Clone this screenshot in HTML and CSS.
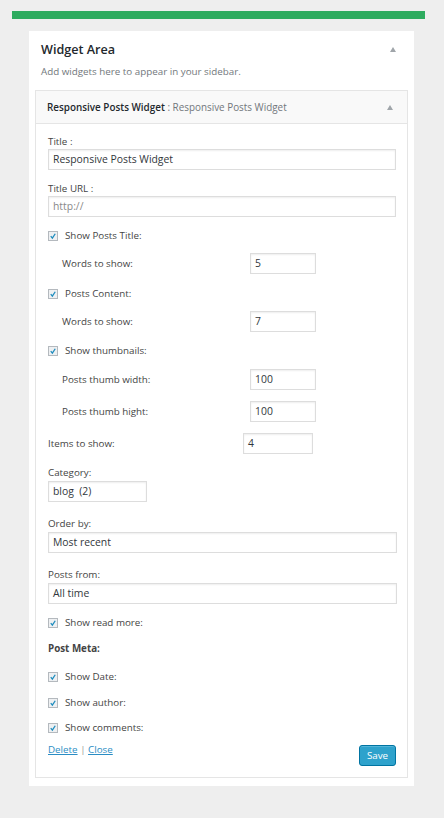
FILE: index.html
```html
<!DOCTYPE html>
<html>
<head>
<meta charset="utf-8">
<link rel="stylesheet" href="styles.css">
</head>
<body>
<div class="bar"></div>
<div class="card">
  <div class="card-head">
    <h2 class="card-title">Widget Area</h2>
    <span class="arrow"></span>
  </div>
  <p class="desc">Add widgets here to appear in your sidebar.</p>
  <div class="widget">
    <div class="widget-head">
      <span class="wt"><b>Responsive Posts Widget</b> : <span class="wt-sub">Responsive Posts Widget</span></span>
      <span class="arrow"></span>
    </div>
    <div class="widget-body">
      <div class="field first">
        <div class="label">Title :</div>
        <div class="box full">Responsive Posts Widget</div>
      </div>
      <div class="field">
        <div class="label">Title URL :</div>
        <div class="box full ph">http://</div>
      </div>
      <div class="check"><span class="cb"><svg viewBox="0 0 10 10"><path d="M2.2 5.2 L4.2 7.6 L7.8 2.2" fill="none" stroke="#1e8cbe" stroke-width="1.6"/></svg></span>Show Posts Title:</div>
      <div class="sub"><span class="sub-label">Words to show:</span><div class="box small">5</div></div>
      <div class="check loose"><span class="cb"><svg viewBox="0 0 10 10"><path d="M2.2 5.2 L4.2 7.6 L7.8 2.2" fill="none" stroke="#1e8cbe" stroke-width="1.6"/></svg></span>Posts Content:</div>
      <div class="sub"><span class="sub-label">Words to show:</span><div class="box small">7</div></div>
      <div class="check"><span class="cb"><svg viewBox="0 0 10 10"><path d="M2.2 5.2 L4.2 7.6 L7.8 2.2" fill="none" stroke="#1e8cbe" stroke-width="1.6"/></svg></span>Show thumbnails:</div>
      <div class="sub tight"><span class="sub-label">Posts thumb width:</span><div class="box small">100</div></div>
      <div class="sub tight"><span class="sub-label">Posts thumb hight:</span><div class="box small">100</div></div>
      <div class="sub items"><span class="items-label">Items to show:</span><div class="box items-box">4</div></div>
      <div class="field">
        <div class="label">Category:</div>
        <div class="box sel-small spaced">blog&nbsp; (2)</div>
      </div>
      <div class="field wide">
        <div class="label">Order by:</div>
        <div class="box sel spaced">Most recent</div>
      </div>
      <div class="field wide">
        <div class="label">Posts from:</div>
        <div class="box sel spaced">All time</div>
      </div>
      <div class="check"><span class="cb"><svg viewBox="0 0 10 10"><path d="M2.2 5.2 L4.2 7.6 L7.8 2.2" fill="none" stroke="#1e8cbe" stroke-width="1.6"/></svg></span>Show read more:</div>
      <div class="meta">Post Meta:</div>
      <div class="check date"><span class="cb"><svg viewBox="0 0 10 10"><path d="M2.2 5.2 L4.2 7.6 L7.8 2.2" fill="none" stroke="#1e8cbe" stroke-width="1.6"/></svg></span>Show Date:</div>
      <div class="check"><span class="cb"><svg viewBox="0 0 10 10"><path d="M2.2 5.2 L4.2 7.6 L7.8 2.2" fill="none" stroke="#1e8cbe" stroke-width="1.6"/></svg></span>Show author:</div>
      <div class="check tight"><span class="cb"><svg viewBox="0 0 10 10"><path d="M2.2 5.2 L4.2 7.6 L7.8 2.2" fill="none" stroke="#1e8cbe" stroke-width="1.6"/></svg></span>Show comments:</div>
      <div class="footer">
        <div class="links"><a href="#">Delete</a> <span class="sep">|</span> <a href="#">Close</a></div>
        <button class="save">Save</button>
      </div>
    </div>
  </div>
</div>
</body>
</html>
```
FILE: styles.css
```css
html, body {
  margin: 0;
  padding: 0;
  background: #eeeeee;
  font-family: "Open Sans", "Liberation Sans", sans-serif;
  font-size: 9.8px;
  color: #444;
}
.bar {
  height: 8px;
  width: 413px;
  margin: 11px 0 0 12px;
  background: #2eab5f;
}
.card {
  width: 385px;
  margin: 12px 0 0 29px;
  background: #fff;
  box-sizing: border-box;
  padding: 10px 6px 8px 6px;
}
.card-head {
  display: flex;
  justify-content: space-between;
  align-items: center;
  padding: 0 12px 0 6px;
}
.card-title {
  margin: 0;
  font-size: 12.6px;
  font-weight: 600;
  line-height: 18px;
  color: #23282d;
}
.arrow {
  width: 0;
  height: 0;
  border-left: 3.5px solid transparent;
  border-right: 3.5px solid transparent;
  border-bottom: 5px solid #a0a5aa;
  margin-top: -2px;
}
.desc {
  margin: 6px 0 0 6px;
  line-height: 14px;
  color: #72777c;
}
.widget {
  margin-top: 11px;
  border: 1px solid #e5e5e5;
}
.widget-head {
  height: 32px;
  background: #f9f9f9;
  border-bottom: 1px solid #e5e5e5;
  display: flex;
  justify-content: space-between;
  align-items: center;
  padding: 0 14px 0 11px;
}
.wt {
  font-size: 9.9px;
  color: #72777c;
  line-height: 14px;
}
.wt b {
  color: #23282d;
  font-weight: 600;
}
.widget-head .arrow {
  margin-top: 0;
}
.widget-body {
  padding: 0 11px 11px 12px;
  display: flex;
  flex-direction: column;
}
.label {
  line-height: 14px;
}
.field {
  margin-top: 12px;
}
.field.first {
  margin-top: 11px;
}
.field.wide {
  margin-top: 15px;
}
.box {
  box-sizing: border-box;
  height: 21px;
  border: 1px solid #dddddd;
  box-shadow: inset 0 1px 2px rgba(0,0,0,0.07);
  background: #fff;
  font-size: 10.4px;
  line-height: 19px;
  padding: 0 4px;
  color: #32373c;
}
.box.spaced {
  margin-top: 1px;
}
.box.full {
  width: 348px;
}
.box.ph {
  color: #8a8a8a;
}
.box.sel {
  width: 349px;
}
.box.sel-small {
  width: 99px;
}
.check {
  margin-top: 12px;
  display: flex;
  align-items: center;
  line-height: 14px;
}
.check.loose {
  margin-top: 13px;
}
.check.date {
  margin-top: 14px;
}
.check.tight {
  margin-top: 11px;
}
.cb {
  box-sizing: border-box;
  width: 10px;
  height: 10px;
  border: 1px solid #b4b9be;
  background: #eef0f2;
  margin-right: 7px;
  display: flex;
}
.cb svg {
  width: 8px;
  height: 8px;
}
.sub {
  margin-top: 10px;
  display: flex;
  align-items: center;
  padding-left: 14px;
}
.sub.tight {
  margin-top: 11px;
}
.sub-label {
  width: 188px;
}
.box.small {
  width: 66px;
}
.sub.items {
  padding-left: 0;
  margin-top: 11px;
}
.items-label {
  width: 195px;
}
.box.items-box {
  width: 70px;
}
.meta {
  margin-top: 12px;
  font-weight: 700;
  line-height: 14px;
  color: #444;
}
.footer {
  margin-top: 10px;
  display: flex;
  justify-content: space-between;
  align-items: flex-start;
}
.links {
  line-height: 14px;
  margin-top: -2px;
}
.links a {
  color: #2a8dc4;
  text-decoration: underline;
}
.sep {
  color: #999;
}
.save {
  box-sizing: border-box;
  width: 37px;
  height: 21px;
  margin-right: 0;
  background: #2ea2cc;
  border: 1px solid #0074a2;
  border-radius: 3px;
  box-shadow: inset 0 1px 0 rgba(120,200,230,0.5);
  color: #fff;
  font-family: "Open Sans", "Liberation Sans", sans-serif;
  font-size: 9.8px;
  padding: 0;
  line-height: 19px;
}
```
